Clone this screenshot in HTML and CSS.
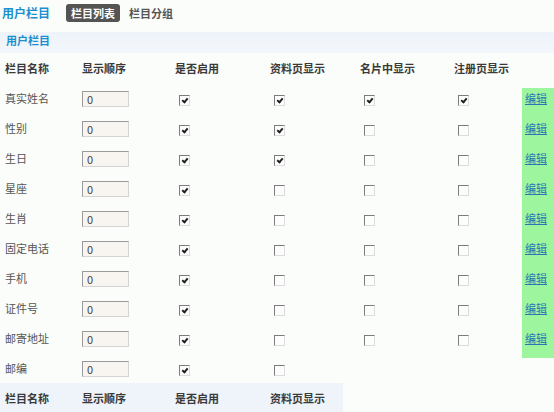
FILE: index.html
```html
<!DOCTYPE html>
<html lang="zh-CN">
<head>
  <meta charset="UTF-8">
  <title>用户栏目</title>
  <link rel="stylesheet" href="styles.css">
</head>
<body>
  <div class="top-bar">
    <span class="page-title">用户栏目</span>
    <span class="tab active">栏目列表</span>
    <span class="tab">栏目分组</span>
  </div>

  <div class="section-bar">用户栏目</div>

  <table class="field-table">
    <colgroup>
      <col style="width:77px"><col style="width:93px"><col style="width:95px">
      <col style="width:90px"><col style="width:94px"><col style="width:73px"><col style="width:32px">
    </colgroup>
    <thead>
      <tr>
        <th>栏目名称</th><th>显示顺序</th><th>是否启用</th><th>资料页显示</th><th>名片中显示</th><th>注册页显示</th><th></th>
      </tr>
    </thead>
    <tbody>
      <tr class="first">
        <td>真实姓名</td><td><input class="order" type="text" value="0"></td>
        <td><input type="checkbox" checked></td><td><input type="checkbox" checked></td>
        <td><input type="checkbox" checked></td><td><input type="checkbox" checked></td>
        <td class="edit"><a href="#">编辑</a></td>
      </tr>
      <tr>
        <td>性别</td><td><input class="order" type="text" value="0"></td>
        <td><input type="checkbox" checked></td><td><input type="checkbox" checked></td>
        <td><input type="checkbox"></td><td><input type="checkbox"></td>
        <td class="edit"><a href="#">编辑</a></td>
      </tr>
      <tr>
        <td>生日</td><td><input class="order" type="text" value="0"></td>
        <td><input type="checkbox" checked></td><td><input type="checkbox" checked></td>
        <td><input type="checkbox"></td><td><input type="checkbox"></td>
        <td class="edit"><a href="#">编辑</a></td>
      </tr>
      <tr>
        <td>星座</td><td><input class="order" type="text" value="0"></td>
        <td><input type="checkbox" checked></td><td><input type="checkbox"></td>
        <td><input type="checkbox"></td><td><input type="checkbox"></td>
        <td class="edit"><a href="#">编辑</a></td>
      </tr>
      <tr>
        <td>生肖</td><td><input class="order" type="text" value="0"></td>
        <td><input type="checkbox" checked></td><td><input type="checkbox"></td>
        <td><input type="checkbox"></td><td><input type="checkbox"></td>
        <td class="edit"><a href="#">编辑</a></td>
      </tr>
      <tr>
        <td>固定电话</td><td><input class="order" type="text" value="0"></td>
        <td><input type="checkbox" checked></td><td><input type="checkbox"></td>
        <td><input type="checkbox"></td><td><input type="checkbox"></td>
        <td class="edit"><a href="#">编辑</a></td>
      </tr>
      <tr>
        <td>手机</td><td><input class="order" type="text" value="0"></td>
        <td><input type="checkbox" checked></td><td><input type="checkbox"></td>
        <td><input type="checkbox"></td><td><input type="checkbox"></td>
        <td class="edit"><a href="#">编辑</a></td>
      </tr>
      <tr>
        <td>证件号</td><td><input class="order" type="text" value="0"></td>
        <td><input type="checkbox" checked></td><td><input type="checkbox"></td>
        <td><input type="checkbox"></td><td><input type="checkbox"></td>
        <td class="edit"><a href="#">编辑</a></td>
      </tr>
      <tr>
        <td>邮寄地址</td><td><input class="order" type="text" value="0"></td>
        <td><input type="checkbox" checked></td><td><input type="checkbox"></td>
        <td><input type="checkbox"></td><td><input type="checkbox"></td>
        <td class="edit"><a href="#">编辑</a></td>
      </tr>
      <tr>
        <td>邮编</td><td><input class="order" type="text" value="0"></td>
        <td><input type="checkbox" checked></td><td><input type="checkbox"></td>
        <td class="blank"></td><td class="blank"></td><td class="edit-tail"></td>
      </tr>
      <tr class="foot-head">
        <th>栏目名称</th><th>显示顺序</th><th>是否启用</th><th class="last">资料页显示</th>
        <td class="blank"></td><td class="blank"></td><td class="blank"></td>
      </tr>
    </tbody>
  </table>
</body>
</html>
```

FILE: styles.css
```css
/* Page */
body {
  margin: 0;
  background-color: #fbfdfa;
  font-family: "Noto Sans CJK SC", "Noto Sans", sans-serif;
  font-size: 11px;
  color: #555;
}

/* Top bar with tabs */
.top-bar {
  height: 32px;
  display: flex;
  align-items: center;
  padding: 0 0 7px 2px;
  box-sizing: border-box;
}

.page-title {
  color: #1c8fce;
  font-size: 12px;
  font-weight: bold;
  margin-right: 16px;
}

.tab {
  font-size: 11px;
  font-weight: 600;
  color: #555;
  padding: 1px 5px;
  margin-right: 4px;
  border-radius: 3px;
}

.tab.active {
  background-color: #545454;
  color: #fff;
  font-weight: bold;
}

/* Section title */
.section-bar {
  height: 21px;
  line-height: 17px;
  padding-left: 6px;
  background: linear-gradient(#eef3fa, #f3f7fb);
  color: #1c8fce;
  font-weight: bold;
  font-size: 11px;
}

/* Field table */
.field-table {
  width: 554px;
  table-layout: fixed;
  border-collapse: collapse;
}

.field-table th,
.field-table td {
  height: 30px;
  padding: 0 5px;
  text-align: left;
  white-space: nowrap;
}

.field-table th {
  color: #3a3a3a;
  font-weight: 600;
}

.field-table td {
  color: #555;
}

.foot-head th {
  background-color: #eef4fa;
}

.foot-head th.last {
  background: linear-gradient(to right, #eef4fa 78px, transparent 78px);
}

.order {
  width: 47px;
  height: 16px;
  box-sizing: border-box;
  margin: 0;
  padding: 0 4px;
  border: 1px solid;
  border-color: #9a9a9a #d4d4d4 #d4d4d4 #9a9a9a;
  background-color: #f8f5f0;
  font-family: inherit;
  font-size: 11px;
  color: #444;
  vertical-align: middle;
}

input[type="checkbox"] {
  appearance: none;
  -webkit-appearance: none;
  position: relative;
  width: 11px;
  height: 11px;
  margin: 0 0 0 4px;
  border: 1px solid;
  border-color: #7c7c7c #dcdcdc #dcdcdc #7c7c7c;
  background-color: #fdfdfd;
  vertical-align: middle;
}

input[type="checkbox"]:checked::after {
  content: "";
  position: absolute;
  left: 3px;
  top: 1px;
  width: 2px;
  height: 4px;
  border-right: 2px solid #222;
  border-bottom: 2px solid #222;
  transform: rotate(40deg);
}

/* Edit column */
.edit {
  background-color: #9df59d;
}

.field-table td.edit {
  padding: 0 3px;
}

.first .edit {
  background: linear-gradient(transparent 5px, #9df59d 5px);
}

.edit-tail {
  background: linear-gradient(#9df59d 5px, transparent 5px);
}

.edit a {
  color: #2a76b4;
  text-decoration: underline;
  font-size: 11px;
}
```
